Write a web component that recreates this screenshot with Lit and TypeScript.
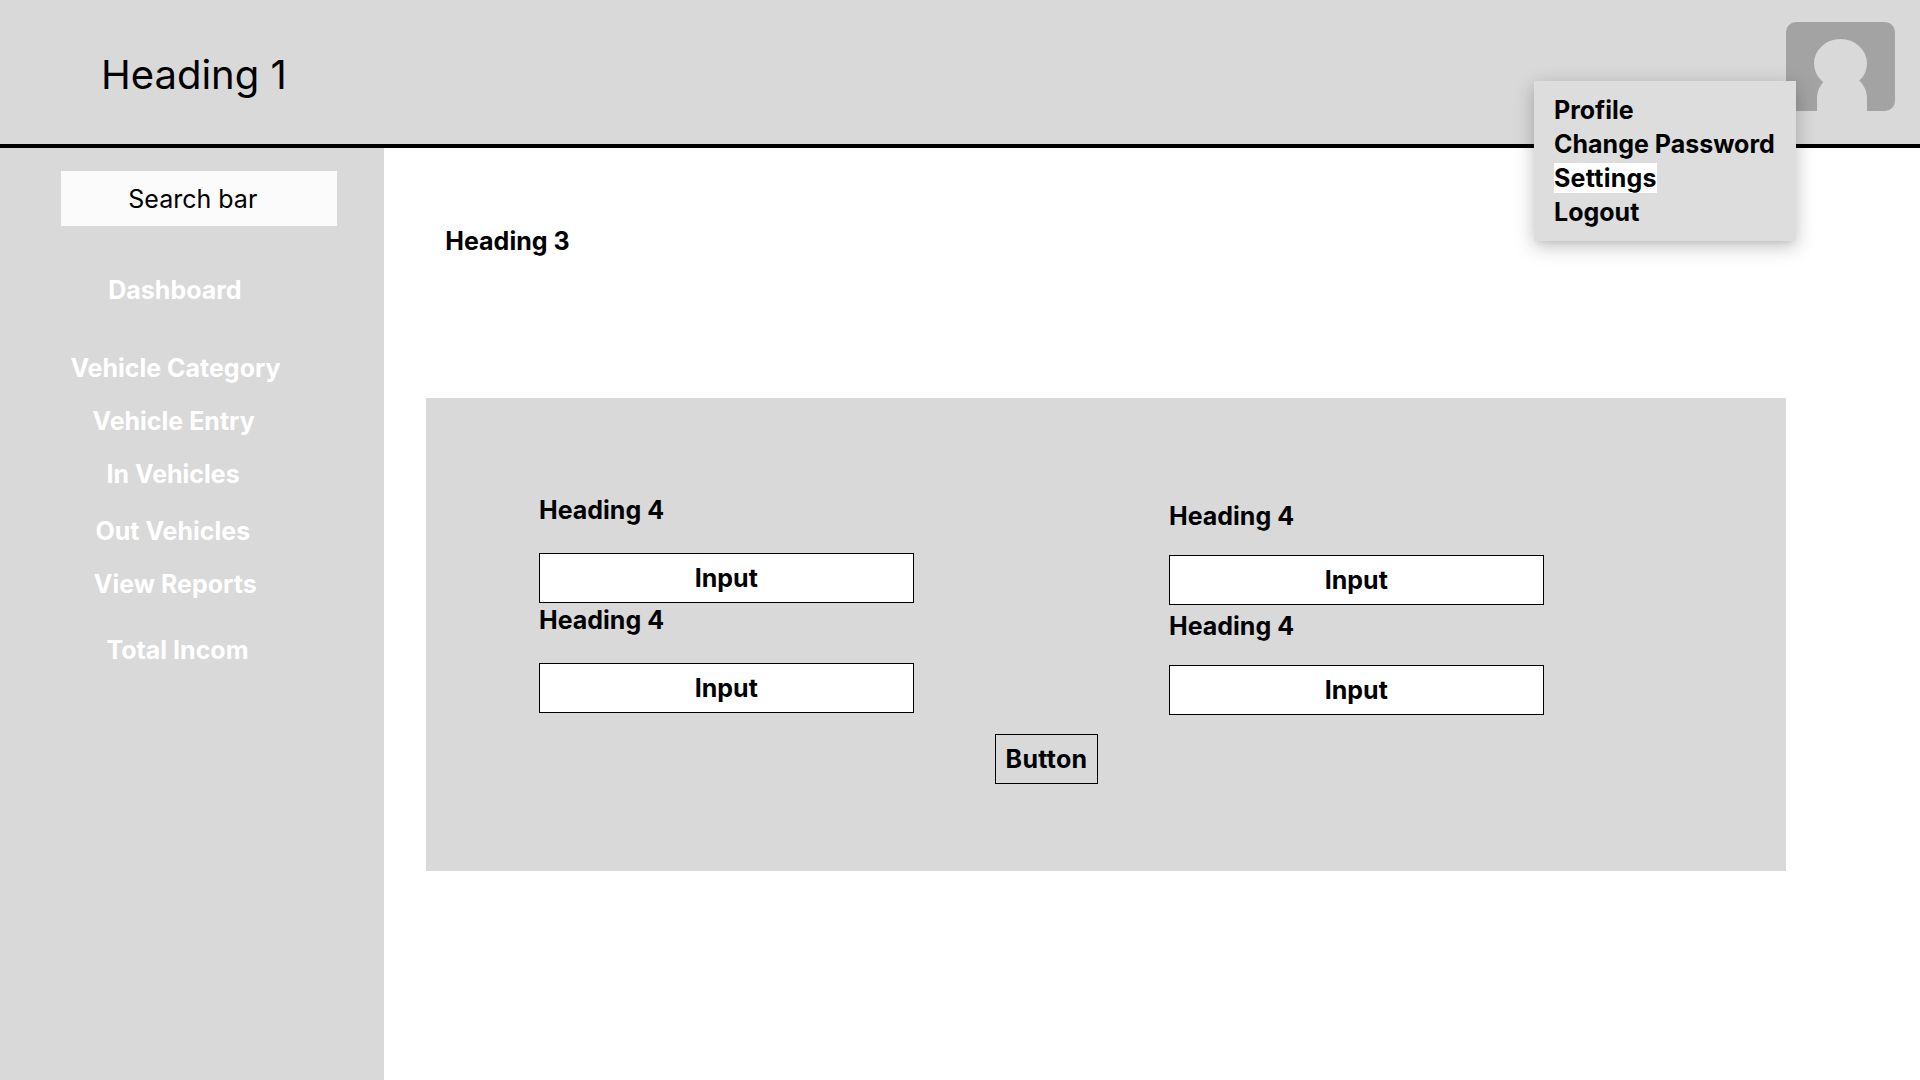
import { LitElement, html, css } from "lit";
import { customElement } from "lit/decorators.js";

interface NavItem {
  label: string;
  cls: string;
}

const NAV: NavItem[] = [
  { label: "Dashboard", cls: "dashboard" },
  { label: "Vehicle Category", cls: "category" },
  { label: "Vehicle Entry", cls: "entry" },
  { label: "In Vehicles", cls: "in" },
  { label: "Out Vehicles", cls: "out" },
  { label: "View Reports", cls: "reports" },
  { label: "Total Incom", cls: "total" },
];

const MENU = ["Profile", "Change Password", "Settings", "Logout"];

@customElement("app-root")
export class AppRoot extends LitElement {
  static styles = css`
    :host {
      display: block;
      position: relative;
      width: 1920px;
      height: 1080px;
      overflow: hidden;
      background: #fff;
      color: #000;
      font-family: Inter, "Liberation Sans", sans-serif;
      font-size: 25px;
      line-height: 30px;
      font-weight: 700;
      white-space: nowrap;
    }
    * {
      box-sizing: border-box;
    }
    h1, h3, h4 {
      margin: 0;
      font-size: 25px;
      font-weight: 700;
    }
    .header {
      display: flex;
      justify-content: space-between;
      height: 148px;
      padding: 22px 25px 0 101px;
      background: #d9d9d9;
      border-bottom: 4px solid #000;
    }
    .header h1 {
      padding-top: 29px;
      font-size: 40px;
      line-height: 48px;
      font-weight: 400;
    }
    .avatar {
      display: block;
      width: 109px;
      height: 89px;
    }
    .body {
      display: flex;
      height: 932px;
    }
    .sidebar {
      width: 384px;
      padding-top: 23px;
      background: #d9d9d9;
    }
    .search {
      width: 276px;
      height: 55px;
      margin-left: 61px;
      padding: 13px 0 0 67.3px;
      background: #fbfbfb;
      font-weight: 400;
    }
    .nav {
      display: flex;
      flex-direction: column;
      padding-top: 49px;
      color: #fff;
    }
    .dashboard { margin-left: 108.3px; }
    .category { margin: 48px 0 0 70.4px; }
    .entry { margin: 23px 0 0 92.5px; }
    .in { margin: 23px 0 0 106.5px; }
    .out { margin: 27px 0 0 95.5px; }
    .reports { margin: 23px 0 0 93.8px; }
    .total { margin: 36px 0 0 106.5px; }
    .main {
      padding: 78px 0 0 42px;
    }
    .main h3 {
      padding-left: 19.3px;
    }
    .panel {
      display: flex;
      align-items: flex-start;
      width: 1360px;
      height: 473px;
      margin-top: 142px;
      padding-left: 113px;
      background: #d9d9d9;
    }
    .col {
      display: flex;
      flex-direction: column;
      width: 375px;
      padding-top: 97px;
    }
    .col h4 {
      height: 58px;
    }
    .col.right {
      padding-top: 103px;
    }
    .col.right h4 {
      height: 54px;
    }
    .box {
      height: 50px;
      padding: 9px 0.5px 0 0;
      border: 1px solid #000;
      background: #fff;
      text-align: center;
    }
    .box + h4 {
      margin-top: 2px;
    }
    .right .box + h4 {
      margin-top: 6px;
    }
    .button {
      width: 103px;
      height: 50px;
      margin: 336px 71px 0 81px;
      padding-top: 9px;
      border: 1px solid #000;
      text-align: center;
      letter-spacing: 0.28px;
    }
    .menu {
      position: absolute;
      left: 1534px;
      top: 81px;
      width: 262px;
      height: 160px;
      padding: 14px 0 0 20px;
      display: flex;
      flex-direction: column;
      align-items: flex-start;
      gap: 4px;
      background: #ddd;
      box-shadow:
        0 5px 5px -3px rgba(0, 0, 0, 0.06),
        0 5px 18px rgba(0, 0, 0, 0.25);
    }
    .selected {
      background: #fff;
      letter-spacing: 0.24px;
    }
  `;

  private field() {
    return html`<h4>Heading 4</h4>
      <div class="box">Input</div>`;
  }

  render() {
    return html`
      <header class="header">
        <h1>Heading 1</h1>
        <svg class="avatar" viewBox="0 0 109 89">
          <rect width="109" height="89" rx="10" fill="#a3a3a3" />
          <ellipse cx="54.5" cy="41.5" rx="26.5" ry="24.5" fill="#d9d9d9" />
          <path d="M31 89V77C31 62 42 52.5 56 52.5S81 62 81 77V89Z" fill="#d9d9d9" />
        </svg>
      </header>
      <div class="body">
        <aside class="sidebar">
          <div class="search">Search bar</div>
          <nav class="nav">
            ${NAV.map((n) => html`<span class=${n.cls}>${n.label}</span>`)}
          </nav>
        </aside>
        <main class="main">
          <h3>Heading 3</h3>
          <section class="panel">
            <div class="col">${this.field()}${this.field()}</div>
            <div class="button">Button</div>
            <div class="col right">${this.field()}${this.field()}</div>
          </section>
        </main>
      </div>
      <div class="menu">
        ${MENU.map((m) => html`<span class=${m === "Settings" ? "selected" : ""}>${m}</span>`)}
      </div>
    `;
  }
}
